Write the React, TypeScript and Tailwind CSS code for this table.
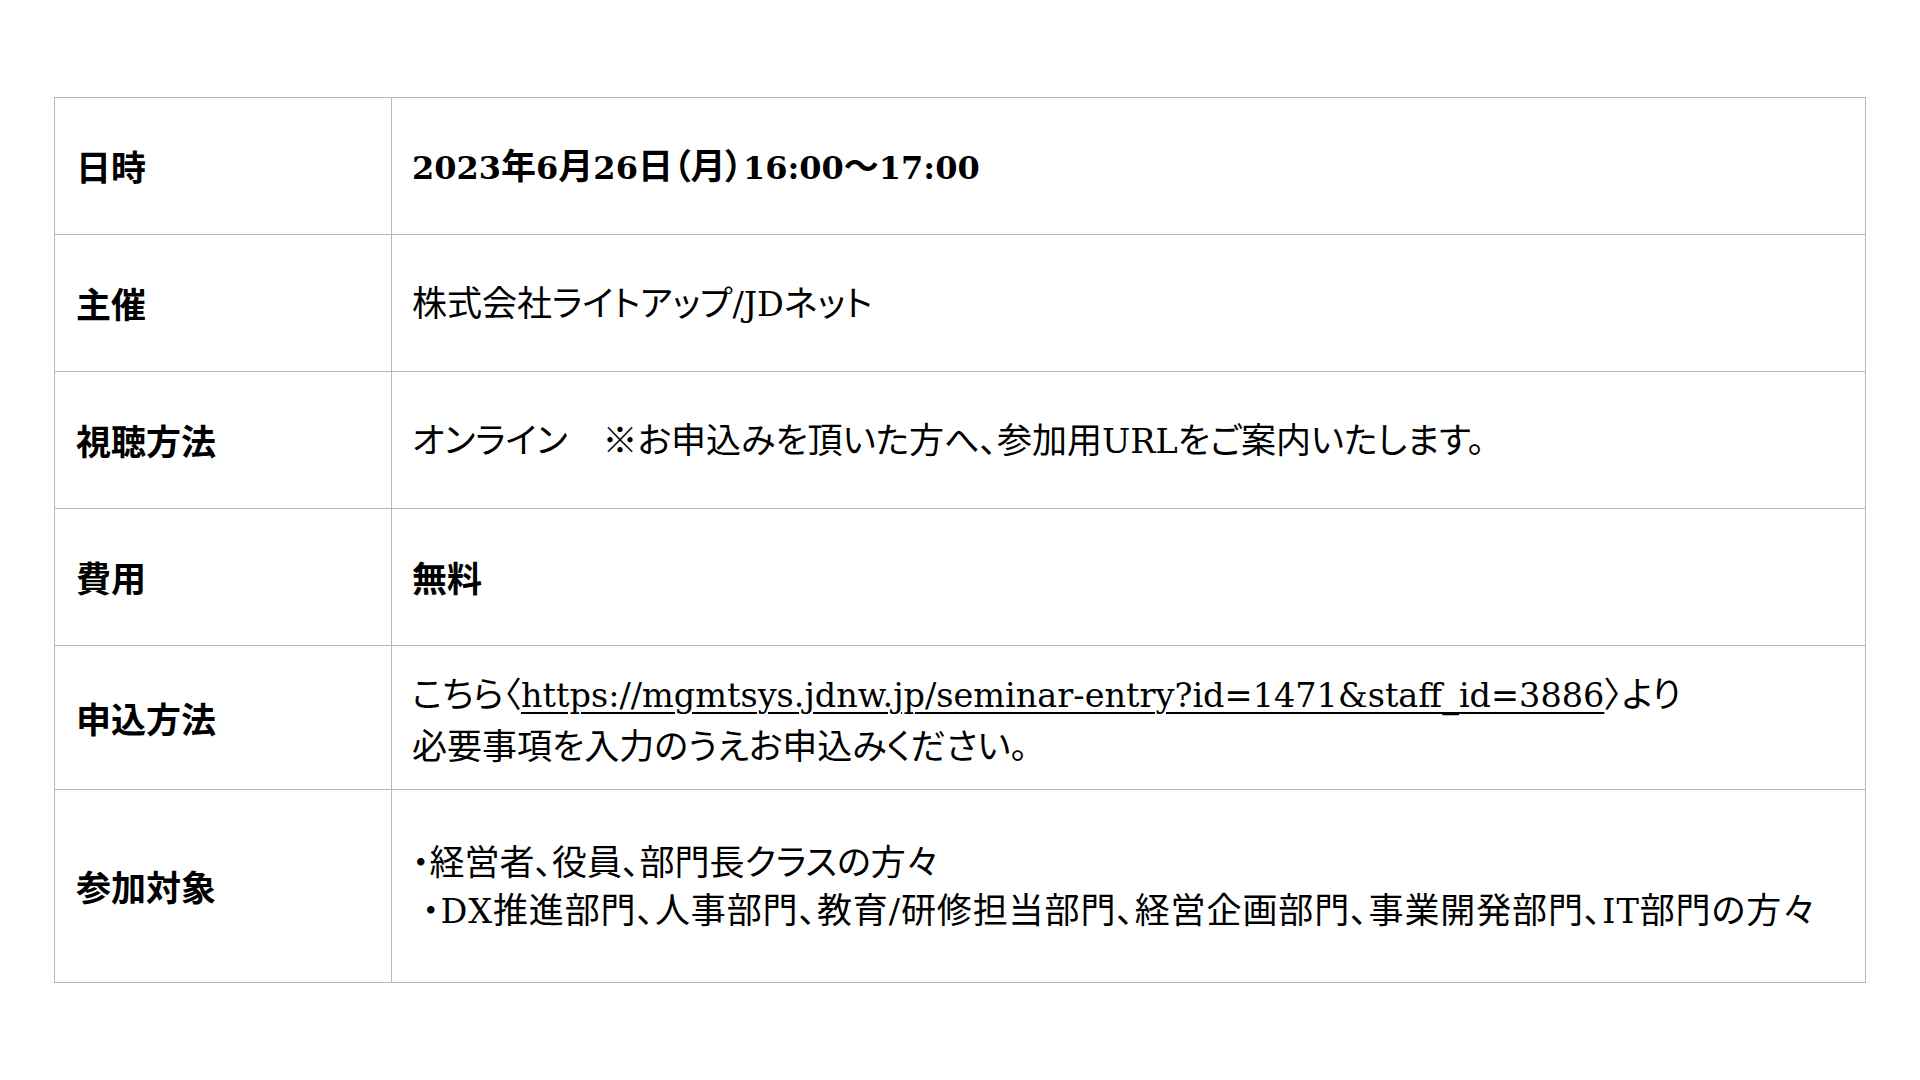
import React from "react";

// Latin runs get the wider serif at a smaller size, the rest stays in the CJK font
const Mixed = ({ text, bold }: { text: string; bold?: boolean }) => {
  const parts = text.split(/([\x21-\x7E][\x20-\x7E]*[\x21-\x7E]|[\x21-\x7E])/);
  return (
    <>
      {parts.map((part, i) =>
        i % 2 === 1 ? (
          <span
            key={i}
            className={bold ? "font-['DejaVu_Serif'] text-[32px]" : "font-['DejaVu_Serif'] text-[33.5px]"}
          >
            {part}
          </span>
        ) : (
          <React.Fragment key={i}>{part}</React.Fragment>
        )
      )}
    </>
  );
};

type Row = {
  label: string;
  height: string;
  bold?: boolean;
  content: React.ReactNode;
};

const rows: Row[] = [
  {
    label: "日時",
    height: "h-[137px]",
    bold: true,
    content: <Mixed bold text="2023年6月26日（月）16:00〜17:00" />,
  },
  {
    label: "主催",
    height: "h-[137px]",
    content: <Mixed text="株式会社ライトアップ/JDネット" />,
  },
  {
    label: "視聴方法",
    height: "h-[137px]",
    content: <Mixed text="オンライン　※お申込みを頂いた方へ、参加用URLをご案内いたします。" />,
  },
  {
    label: "費用",
    height: "h-[137px]",
    bold: true,
    content: "無料",
  },
  {
    label: "申込方法",
    height: "h-[144px]",
    content: (
      <>
        <div>
          こちら〈
          <a href="#" className="underline underline-offset-[5px] decoration-[2px]">
            <Mixed text="https://mgmtsys.jdnw.jp/seminar-entry?id=1471&staff_id=3886" />
          </a>
          〉より
        </div>
        <div>必要事項を入力のうえお申込みください。</div>
      </>
    ),
  },
  {
    label: "参加対象",
    height: "h-[193px]",
    content: (
      <>
        <div>・経営者、役員、部門長クラスの方々</div>
        <div className="ml-[10px] tracking-[0.9px]">
          <Mixed text="・DX推進部門、人事部門、教育/研修担当部門、経営企画部門、事業開発部門、IT部門の方々" />
        </div>
      </>
    ),
  },
];

export default function App() {
  return (
    <div className="min-h-screen w-full bg-white pt-[97px] pl-[54px] text-black font-['Noto_Sans_CJK_JP',sans-serif]">
      <table className="w-[1812px] border-collapse text-[35px] leading-[48px]">
        <tbody>
          {rows.map((row) => (
            <tr key={row.label} className={row.height}>
              <td className="w-[337px] border border-[#b8b8b8] pl-[21px] align-middle font-bold">
                {row.label}
              </td>
              <td
                className={`border border-[#b8b8b8] pl-[20px] align-middle whitespace-nowrap [font-feature-settings:'palt'] ${
                  row.bold ? "font-bold" : "font-normal"
                }`}
              >
                {row.content}
              </td>
            </tr>
          ))}
        </tbody>
      </table>
    </div>
  );
}
